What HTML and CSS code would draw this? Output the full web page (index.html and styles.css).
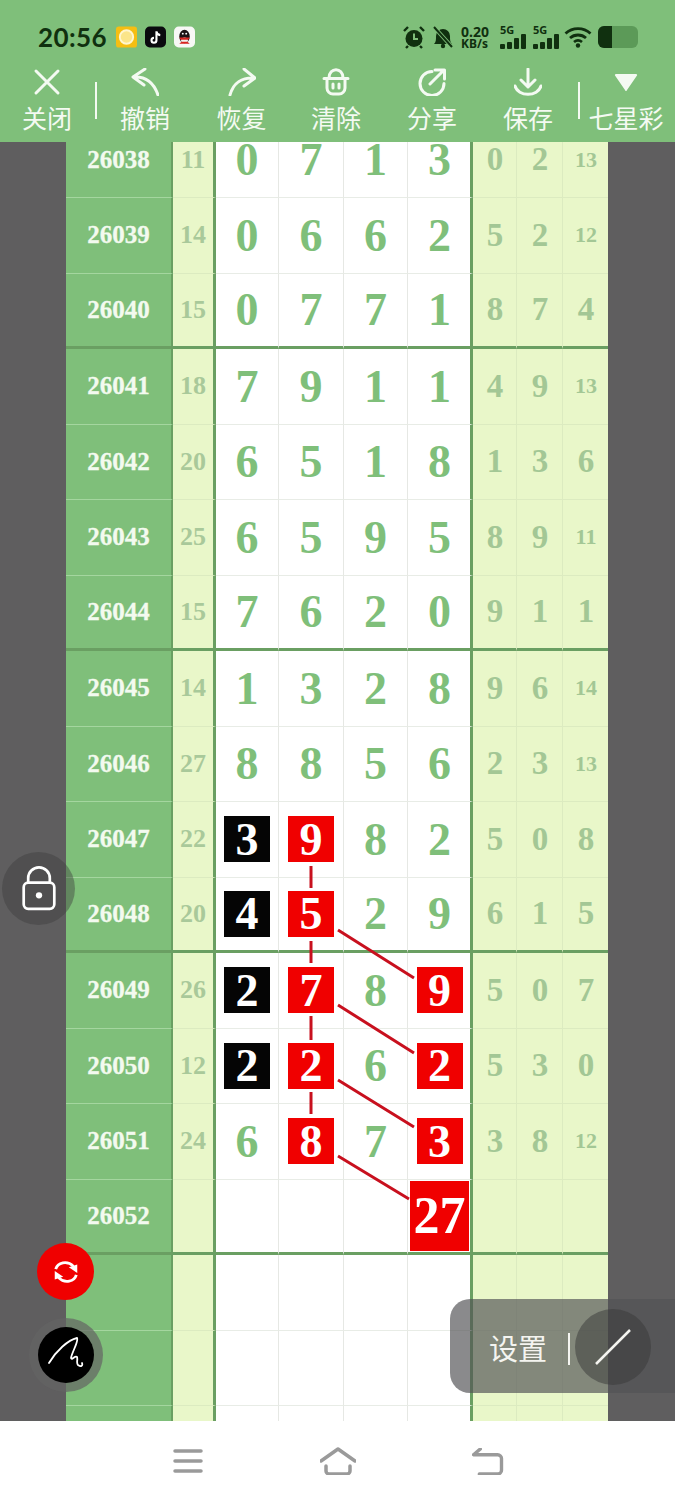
FILE: index.html
```html
<!DOCTYPE html>
<html lang="zh-CN">
<head>
    <meta charset="UTF-8">
    <meta name="viewport" content="width=device-width, initial-scale=1.0">
    <title>七星彩</title>
    <link rel="stylesheet" href="styles.css">
</head>
<body>
<div class="phone">
    <header class="top">
        <div class="status">
            <span class="time">20:56</span>
            <div class="apps">
                <svg class="app" viewBox="0 0 22 22"><rect width="22" height="22" rx="3" fill="#F5BE12"/><circle cx="11" cy="11" r="7" fill="#FBE58A" stroke="#FFF6CF" stroke-width="2"/></svg>
                <svg class="app" viewBox="0 0 22 22"><rect width="22" height="22" rx="5" fill="#0A0A0E"/><path d="M12 5v9.500a2.600 2.600 0 1 1-2.600-2.600M12 5c.3 2.400 1.800 3.800 4 4" fill="none" stroke="#fff" stroke-width="2.200"/></svg>
                <svg class="app" viewBox="0 0 22 22"><rect width="22" height="22" rx="5" fill="#F8F8F6"/><ellipse cx="11" cy="10.500" rx="5.500" ry="7" fill="#1B1214"/><ellipse cx="11" cy="14.500" rx="3.600" ry="3" fill="#F4F0EC"/><path d="M5.500 11.500h11l-1.500 2.500h-8z" fill="#D8231F"/><path d="M5.500 18l2.500-2h6l2.500 2z" fill="#D8231F"/><circle cx="9.200" cy="7.500" r="1" fill="#fff"/><circle cx="12.800" cy="7.500" r="1" fill="#fff"/></svg>
            </div>
            <div class="sys">
                <svg class="sys-icon" viewBox="0 0 24 24"><circle cx="12" cy="13.500" r="8.500" fill="#10300F"/><path d="M2 6l4-4M22 6l-4-4M6 21l-2 2M18 21l2 2" stroke="#10300F" stroke-width="2.400"/><path d="M12 8.500v5.500h4" fill="none" stroke="#7FBF7A" stroke-width="2"/></svg>
                <svg class="sys-icon" viewBox="0 0 24 24"><path d="M3 19c2-2 2-4 2-8a7 7 0 0 1 14 0c0 4 0 6 2 8z" fill="#10300F"/><circle cx="12" cy="21" r="2.200" fill="#10300F"/><path d="M3 2l18 20" stroke="#7FBF7A" stroke-width="4"/><path d="M3 2l18 20" stroke="#10300F" stroke-width="2"/></svg>
                <div class="speed"><b>0.20</b><b class="unit">KB/s</b></div>
                <div class="signal"><b>5G</b><i class="b1"></i><i class="b2"></i><i class="b3"></i><i class="b4"></i></div>
                <div class="signal"><b>5G</b><i class="b1"></i><i class="b2"></i><i class="b3"></i><i class="b4"></i></div>
                <svg class="wifi" viewBox="0 0 28 22"><path d="M1.500 7.500c7-6.500 18-6.500 25 0M6 12c4.500-4 11.500-4 16 0M10 16c2.500-2 5.500-2 8 0" fill="none" stroke="#10300F" stroke-width="2.800"/><circle cx="14" cy="19.500" r="2.200" fill="#10300F"/></svg>
                <div class="battery"><span class="level"></span></div>
            </div>
        </div>
        <nav class="tools">
            <div class="tool">
                <svg viewBox="0 0 28 28"><path d="M3 3l22 22M25 3L3 25"/></svg>
                <span>关闭</span>
            </div>
            <i class="rule"></i>
            <div class="tool">
                <svg viewBox="0 0 28 28"><path d="M14 1L2 9l11 8M2 9c13-1 21 6 25 18"/></svg>
                <span>撤销</span>
            </div>
            <div class="tool">
                <svg viewBox="0 0 28 28"><path d="M16 1l11 9-11 8M27 10C14 9 5 15 2 27"/></svg>
                <span>恢复</span>
            </div>
            <div class="tool">
                <svg viewBox="0 0 28 28"><path d="M7 10C7-1 21-1 21 10M2 10.500h24M5 11v9a6 6 0 0 0 6 6h6a6 6 0 0 0 6-6v-9M11 16v4M17 16v4"/></svg>
                <span>清除</span>
            </div>
            <div class="tool">
                <svg viewBox="0 0 28 28"><path d="M14 3.500a12 12 0 1 0 12 12M12 16L26 2M17 2h9.500v9"/></svg>
                <span>分享</span>
            </div>
            <div class="tool">
                <svg viewBox="0 0 28 28"><path d="M14 1v18M7 12l7 7 7-7M1 18c3 11 23 11 26 0"/></svg>
                <span>保存</span>
            </div>
            <i class="rule"></i>
            <div class="tool">
                <svg viewBox="0 0 28 28"><path class="solid" d="M4 6h20a1 1 0 0 1 1 1.500L15 22a1 1 0 0 1-2 0L3 7.500A1 1 0 0 1 4 6z"/></svg>
                <span>七星彩</span>
            </div>
        </nav>
    </header>

    <main class="board">
        <div class="sheet">
            <div class="row"><div class="issue">26038</div><div class="sum">11</div><div class="n">0</div><div class="n">7</div><div class="n">1</div><div class="n">3</div><div class="r">0</div><div class="r">2</div><div class="r sm">13</div></div>
            <div class="row"><div class="issue">26039</div><div class="sum">14</div><div class="n">0</div><div class="n">6</div><div class="n">6</div><div class="n">2</div><div class="r">5</div><div class="r">2</div><div class="r sm">12</div></div>
            <div class="row end"><div class="issue">26040</div><div class="sum">15</div><div class="n">0</div><div class="n">7</div><div class="n">7</div><div class="n">1</div><div class="r">8</div><div class="r">7</div><div class="r">4</div></div>
            <div class="row"><div class="issue">26041</div><div class="sum">18</div><div class="n">7</div><div class="n">9</div><div class="n">1</div><div class="n">1</div><div class="r">4</div><div class="r">9</div><div class="r sm">13</div></div>
            <div class="row"><div class="issue">26042</div><div class="sum">20</div><div class="n">6</div><div class="n">5</div><div class="n">1</div><div class="n">8</div><div class="r">1</div><div class="r">3</div><div class="r">6</div></div>
            <div class="row"><div class="issue">26043</div><div class="sum">25</div><div class="n">6</div><div class="n">5</div><div class="n">9</div><div class="n">5</div><div class="r">8</div><div class="r">9</div><div class="r sm">11</div></div>
            <div class="row end"><div class="issue">26044</div><div class="sum">15</div><div class="n">7</div><div class="n">6</div><div class="n">2</div><div class="n">0</div><div class="r">9</div><div class="r">1</div><div class="r">1</div></div>
            <div class="row"><div class="issue">26045</div><div class="sum">14</div><div class="n">1</div><div class="n">3</div><div class="n">2</div><div class="n">8</div><div class="r">9</div><div class="r">6</div><div class="r sm">14</div></div>
            <div class="row"><div class="issue">26046</div><div class="sum">27</div><div class="n">8</div><div class="n">8</div><div class="n">5</div><div class="n">6</div><div class="r">2</div><div class="r">3</div><div class="r sm">13</div></div>
            <div class="row"><div class="issue">26047</div><div class="sum">22</div><div class="n"><b class="mark black">3</b></div><div class="n"><b class="mark red">9</b></div><div class="n">8</div><div class="n">2</div><div class="r">5</div><div class="r">0</div><div class="r">8</div></div>
            <div class="row end"><div class="issue">26048</div><div class="sum">20</div><div class="n"><b class="mark black">4</b></div><div class="n"><b class="mark red">5</b></div><div class="n">2</div><div class="n">9</div><div class="r">6</div><div class="r">1</div><div class="r">5</div></div>
            <div class="row"><div class="issue">26049</div><div class="sum">26</div><div class="n"><b class="mark black">2</b></div><div class="n"><b class="mark red">7</b></div><div class="n">8</div><div class="n"><b class="mark red">9</b></div><div class="r">5</div><div class="r">0</div><div class="r">7</div></div>
            <div class="row"><div class="issue">26050</div><div class="sum">12</div><div class="n"><b class="mark black">2</b></div><div class="n"><b class="mark red">2</b></div><div class="n">6</div><div class="n"><b class="mark red">2</b></div><div class="r">5</div><div class="r">3</div><div class="r">0</div></div>
            <div class="row"><div class="issue">26051</div><div class="sum">24</div><div class="n">6</div><div class="n"><b class="mark red">8</b></div><div class="n">7</div><div class="n"><b class="mark red">3</b></div><div class="r">3</div><div class="r">8</div><div class="r sm">12</div></div>
            <div class="row end"><div class="issue">26052</div><div class="sum"></div><div class="n"></div><div class="n"></div><div class="n"></div><div class="n"><b class="mark red big">27</b></div><div class="r"></div><div class="r"></div><div class="r"></div></div>
            <div class="row"><div class="issue"></div><div class="sum"></div><div class="n"></div><div class="n"></div><div class="n"></div><div class="n"></div><div class="r"></div><div class="r"></div><div class="r"></div></div>
            <div class="row"><div class="issue"></div><div class="sum"></div><div class="n"></div><div class="n"></div><div class="n"></div><div class="n"></div><div class="r"></div><div class="r"></div><div class="r"></div></div>
            <div class="row"><div class="issue"></div><div class="sum"></div><div class="n"></div><div class="n"></div><div class="n"></div><div class="n"></div><div class="r"></div><div class="r"></div><div class="r"></div></div>
        </div>

        <!-- board starts at y=142 -->
        <svg class="links" viewBox="0 0 675 1279">
            <path d="M311 724v22M311 799v22M311 874v24M311 950v22M338 788l76 48M338 863l76 48M338 938l76 47M338 1014l71 43"/>
        </svg>

        <div class="fab lock">
            <svg viewBox="0 0 40 50"><path d="M8 18v-5a12 12 0 0 1 24 0v5"/><rect x="3" y="18" width="34" height="29" rx="5"/><circle class="dot" cx="20" cy="32" r="3.500"/></svg>
        </div>
        <div class="fab refresh">
            <svg viewBox="0 0 32 32"><path d="M5 13C7 6 17 3 24 10M27 19c-2 7-12 10-19 3"/><path class="solid" d="M19 11l9-3v9zM13 21l-9 3v-9z"/></svg>
        </div>
        <div class="pen-halo">
            <div class="fab pen">
                <svg viewBox="0 0 36 36"><path d="M1 26C8 14 20 3 29 1c2 3-5 14-6 20 1 3 4-3 6-1 1 3-1 6 1 8 3 2 5 1 4-2"/></svg>
            </div>
        </div>
        <div class="pill">
            <span class="pill-text">设置</span>
            <i class="pill-rule"></i>
            <div class="pill-knob">
                <svg viewBox="0 0 36 36"><path d="M1 35L35 1"/></svg>
            </div>
        </div>
    </main>

    <footer class="nav">
        <svg class="menu" viewBox="0 0 28 24"><path d="M1 2h26M1 12h26M1 22h26"/></svg>
        <svg class="home" viewBox="0 0 36 28"><path d="M1 14L18 2l17 12M6 19v5a3 3 0 0 0 3 3h18a3 3 0 0 0 3-3v-5"/></svg>
        <svg class="back" viewBox="0 0 32 28"><path d="M1 7h25a4 4 0 0 1 4 4v12a4 4 0 0 1-4 4H7M1 7l7-6"/></svg>
    </footer>
</div>
</body>
</html>
```

FILE: styles.css
```css
* {
    box-sizing: border-box;
}
body {
    margin: 0;
    background-color: #5F5E5F;
    font-family: "Noto Sans CJK SC", "Noto Sans", sans-serif;
}
.phone {
    display: flex;
    flex-direction: column;
    width: 675px;
    height: 1500px;
    overflow: hidden;
}

/* status bar + toolbar */
.top {
    height: 142px;
    flex: none;
    background: #7FBF7A;
    color: #F4FAF2;
}
.status {
    display: flex;
    align-items: center;
    height: 66px;
    padding: 8px 37px 0 38px;
}
.time {
    font-family: Lato, sans-serif;
    font-size: 26px;
    font-weight: 700;
    color: #10300F;
    letter-spacing: 0.4px;
}
.apps {
    display: flex;
    gap: 8px;
    margin-left: 9px;
}
.app {
    width: 21px;
    height: 22px;
}
.sys {
    display: flex;
    align-items: center;
    margin-left: auto;
    color: #10300F;
}
.sys-icon {
    width: 24px;
    height: 24px;
    margin-right: 5px;
}
.speed {
    display: flex;
    flex-direction: column;
    width: 33px;
    margin: 0 6px 0 1px;
    font-family: "Noto Sans", sans-serif;
    font-size: 14px;
    line-height: 13px;
}
.speed .unit {
    font-size: 12px;
    line-height: 11px;
}
.signal {
    position: relative;
    display: flex;
    align-items: flex-end;
    gap: 2px;
    width: 26px;
    height: 24px;
    margin-right: 7px;
}
.signal:nth-child(5) {
    margin-right: 5px;
}
.signal b {
    position: absolute;
    left: 0;
    top: -1px;
    font-family: "Noto Sans", sans-serif;
    font-size: 11px;
    line-height: 11px;
}
.signal i {
    width: 5px;
    background: #10300F;
    border-radius: 1px;
}
.b1 { height: 5px; }
.b2 { height: 7px; }
.b3 { height: 11px; }
.b4 { height: 15px; }
.wifi {
    width: 28px;
    height: 22px;
    margin-right: 6px;
}
.battery {
    width: 40px;
    height: 22px;
    border-radius: 6px;
    background: #5C9A58;
    overflow: hidden;
}
.level {
    display: block;
    width: 14px;
    height: 100%;
    background: #10300F;
}

.tools {
    display: grid;
    grid-template-columns: 94px 0 102px 91px 98px 94px 98px 0 98px;
    height: 76px;
}
.tool {
    display: flex;
    flex-direction: column;
    align-items: center;
}
.tool svg {
    width: 28px;
    height: 28px;
    margin-top: 2px;
    fill: none;
    stroke: #F4FAF2;
    stroke-width: 3;
    stroke-linecap: round;
    stroke-linejoin: round;
}
.tool svg .solid {
    fill: #F4FAF2;
    stroke: none;
}
.tool span {
    margin-top: 4px;
    font-size: 25px;
    line-height: 34px;
    white-space: nowrap;
}
.rule {
    width: 2px;
    height: 37px;
    margin: 16px 0 0 1px;
    background: #F4FAF2;
}

/* lottery sheet */
.board {
    position: relative;
    flex: 1;
    overflow: hidden;
    padding: 0 67px 0 66px;
    background: #5F5E5F;
    font-family: "Liberation Serif", serif;
    font-weight: 700;
}
.sheet {
    margin-top: -19.500px;
}
.row {
    display: grid;
    grid-template-columns: 107px 43px 63px 65px 64px 65px 44px 46px 45px;
    height: 75.500px;
}
.row > div {
    display: flex;
    align-items: center;
    justify-content: center;
    border-bottom-width: 1px;
    border-bottom-style: solid;
}
.issue {
    background: #7FBF7A;
    border-right: 2px solid #6A9F62;
    border-bottom-color: #A4D69F;
    color: #F3FAEF;
    font-size: 25px;
    -webkit-text-stroke: 0.3px #F3FAEF;
}
.sum {
    background: #E9F7C9;
    border-right: 3px solid #6A9F62;
    border-bottom-color: #DCEBC0;
    color: #A9C99A;
    font-size: 26px;
}
.n {
    background: #fff;
    border-right: 1px solid #E6E8E4;
    border-bottom-color: #E8ECE6;
    color: #7FBF7A;
    font-size: 46px;
}
.n:nth-child(6) {
    padding-left: 1px;
    border-right: 3px solid #6A9F62;
}
.r {
    padding-left: 1px;
    background: #E9F7C9;
    border-right: 1px solid #DCEBC0;
    border-bottom-color: #DCEBC0;
    color: #A3C795;
    font-size: 33px;
}
.r:last-child {
    border-right: none;
}
.r.sm {
    font-size: 22px;
}
.row.end > div {
    border-bottom: 3px solid #6A9F62;
}
.mark {
    display: flex;
    align-items: center;
    justify-content: center;
    width: 46px;
    height: 46px;
    color: #fff;
}
.black {
    background: #050505;
}
.red {
    background: #F00000;
}
.mark.big {
    flex: none;
    width: 59px;
    height: 70px;
    font-size: 52px;
}
.links {
    position: absolute;
    left: 0;
    top: 0;
    width: 675px;
    height: 1279px;
    fill: none;
    stroke: #C8101E;
    stroke-width: 3;
    pointer-events: none;
}

/* floating buttons */
.fab {
    position: absolute;
    display: flex;
    align-items: center;
    justify-content: center;
    border-radius: 50%;
}
.lock {
    left: 2px;
    top: 710px;
    width: 73px;
    height: 73px;
    background: rgba(60, 60, 60, 0.43);
}
.lock svg {
    width: 36px;
    height: 46px;
    fill: none;
    stroke: #fff;
    stroke-width: 3;
}
.lock .dot {
    fill: #fff;
    stroke: none;
}
.refresh {
    left: 37px;
    top: 1101px;
    width: 57px;
    height: 57px;
    background: #F00000;
}
.refresh svg {
    width: 30px;
    height: 30px;
    fill: none;
    stroke: #fff;
    stroke-width: 3;
}
.refresh .solid {
    fill: #fff;
    stroke: none;
}
.pen-halo {
    position: absolute;
    left: 29px;
    top: 1176px;
    width: 74px;
    height: 74px;
    border-radius: 50%;
    background: rgba(100, 100, 100, 0.7);
}
.pen {
    left: 9px;
    top: 9px;
    width: 56px;
    height: 56px;
    background: #000;
}
.pen svg {
    width: 36px;
    height: 36px;
    fill: none;
    stroke: #fff;
    stroke-width: 1.800;
    stroke-linecap: round;
}
.pill {
    position: absolute;
    left: 450px;
    top: 1157px;
    display: flex;
    align-items: center;
    width: 225px;
    height: 94px;
    padding-left: 39px;
    border-radius: 20px 0 0 20px;
    background: rgba(83, 83, 85, 0.68);
    color: #F4F4F0;
    font-family: "Noto Sans CJK SC", sans-serif;
    font-weight: 400;
}
.pill-text {
    margin-top: 2px;
    font-size: 29px;
    line-height: 40px;
    white-space: nowrap;
}
.pill-rule {
    width: 2px;
    height: 32px;
    margin: 6px 0 0 21px;
    background: #F4F4F0;
}
.pill-knob {
    display: flex;
    align-items: center;
    justify-content: center;
    width: 76px;
    height: 76px;
    margin: 2px 0 0 5px;
    border-radius: 50%;
    background: rgba(55, 55, 55, 0.5);
}
.pill-knob svg {
    width: 36px;
    height: 36px;
    fill: none;
    stroke: #F4F4F0;
    stroke-width: 2.500;
}

/* android nav */
.nav {
    position: relative;
    flex: none;
    height: 79px;
    background: #fff;
}
.nav svg {
    position: absolute;
    fill: none;
    stroke: #9A9A9A;
    stroke-width: 3.500;
    stroke-linecap: round;
    stroke-linejoin: round;
}
.menu {
    left: 173px;
    top: 28px;
    width: 30px;
    height: 24px;
}
.home {
    left: 320px;
    top: 26px;
    width: 36px;
    height: 28px;
}
.back {
    left: 472px;
    top: 27px;
    width: 32px;
    height: 27px;
}
```
